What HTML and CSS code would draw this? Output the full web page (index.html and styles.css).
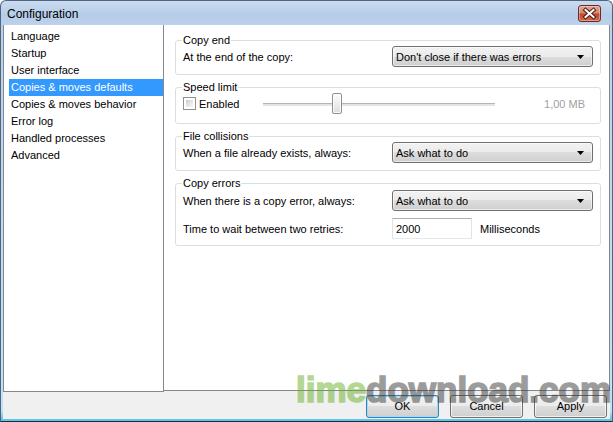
FILE: index.html
```html
<!DOCTYPE html>
<html>
<head>
<meta charset="utf-8">
<title>Configuration</title>
<link rel="stylesheet" href="styles.css">
</head>
<body>
<div class="window">
  <div class="titlebar">
    <span class="title">Configuration</span>
    <button class="close" aria-label="Close">
      <svg width="23" height="17" viewBox="0 0 23 17">
        <path d="M7.5 5L15.5 12M15.5 5L7.5 12" stroke="#4a1a12" stroke-width="4" stroke-linecap="square"/>
        <path d="M7.5 5L15.5 12M15.5 5L7.5 12" stroke="#ffffff" stroke-width="2" stroke-linecap="square"/>
      </svg>
    </button>
  </div>
  <div class="client">
    <div class="main">
      <ul class="nav">
        <li>Language</li>
        <li>Startup</li>
        <li>User interface</li>
        <li class="sel">Copies &amp; moves defaults</li>
        <li>Copies &amp; moves behavior</li>
        <li>Error log</li>
        <li>Handled processes</li>
        <li>Advanced</li>
      </ul>
      <div class="panel">
        <fieldset class="group g1">
          <legend>Copy end</legend>
          <div class="row">
            <span class="lbl">At the end of the copy:</span>
            <div class="combo"><span>Don't close if there was errors</span><svg class="arrow" width="7" height="4" viewBox="0 0 7 4"><path d="M0 0H7L3.5 4Z" fill="#000"/></svg></div>
          </div>
        </fieldset>
        <fieldset class="group g2">
          <legend>Speed limit</legend>
          <div class="row speed">
            <label class="check"><span class="box"></span>Enabled</label>
            <div class="slider"><div class="track"></div><div class="handle"></div></div>
            <span class="mb">1,00 MB</span>
          </div>
        </fieldset>
        <fieldset class="group g3">
          <legend>File collisions</legend>
          <div class="row">
            <span class="lbl">When a file already exists, always:</span>
            <div class="combo"><span>Ask what to do</span><svg class="arrow" width="7" height="4" viewBox="0 0 7 4"><path d="M0 0H7L3.5 4Z" fill="#000"/></svg></div>
          </div>
        </fieldset>
        <fieldset class="group g4">
          <legend>Copy errors</legend>
          <div class="row r1">
            <span class="lbl">When there is a copy error, always:</span>
            <div class="combo"><span>Ask what to do</span><svg class="arrow" width="7" height="4" viewBox="0 0 7 4"><path d="M0 0H7L3.5 4Z" fill="#000"/></svg></div>
          </div>
          <div class="row r2">
            <span class="lbl">Time to wait between two retries:</span>
            <div class="input">2000</div>
            <span class="unit">Milliseconds</span>
          </div>
        </fieldset>
      </div>
    </div>
    <div class="buttons">
      <button class="btn default">OK</button>
      <button class="btn">Cancel</button>
      <button class="btn">Apply</button>
    </div>
  </div>
  <div class="watermark"><span class="lime">lime</span><span class="rest">download.com</span></div>
</div>
</body>
</html>
```
FILE: styles.css
```css
html, body {
  margin: 0;
  padding: 0;
}
body {
  width: 613px;
  height: 422px;
  overflow: hidden;
  background: #ffffff;
  font-family: "Liberation Sans", Arial, sans-serif;
  font-size: 11px;
  color: #000;
}
.window {
  position: relative;
  box-sizing: border-box;
  width: 613px;
  height: 422px;
  border: 1px solid #4f6681;
  border-bottom-color: #1d2a38;
  border-radius: 6px 6px 0 0;
  background: linear-gradient(to bottom, #c9dbf0 0, #b6cde8 14px, #bcd2eb 24px, #c3d8ee 200px, #bfe2f4 410px, #5cc6ee 418px, #5cc6ee 422px);
  display: flex;
  flex-direction: column;
  overflow: hidden;
}
.titlebar {
  height: 24px;
  flex: none;
  display: flex;
  align-items: center;
  justify-content: space-between;
  padding: 0 11px 0 6px;
}
.title {
  font-size: 12px;
  color: #000;
  padding-top: 1px;
}
.close {
  width: 23px;
  height: 17px;
  padding: 0;
  margin: 0;
  border: 1px solid #6d2a20;
  border-radius: 3px;
  background: linear-gradient(to bottom, #e4a393 0, #d88471 45%, #c4462c 55%, #d16a4c 100%);
  box-shadow: inset 0 0 0 1px rgba(255, 255, 255, 0.35);
  display: flex;
  align-items: center;
  justify-content: center;
  box-sizing: border-box;
}
.close svg {
  display: block;
  flex: none;
}
.client {
  flex: 1;
  margin: 0 2px 2px 2px;
  background: #f0f0f0;
  display: flex;
  flex-direction: column;
}
.main {
  display: flex;
  align-items: flex-start;
  height: 367px;
  flex: none;
}
.nav {
  list-style: none;
  margin: 0;
  padding: 3px 0 0 5px;
  box-sizing: border-box;
  width: 161px;
  height: 367px;
  flex: none;
  background: #fff;
  border: 1px solid #828790;
  border-top: none;
}
.nav li {
  height: 17px;
  line-height: 17px;
  padding-left: 2px;
  white-space: nowrap;
}
.nav li.sel {
  background: #3399ff;
  color: #fff;
}
.panel {
  flex: 1;
  height: 366px;
  box-sizing: border-box;
  background: #fff;
  border-right: 1px solid #828790;
  border-bottom: 1px solid #828790;
  padding: 9px 8px 0 11px;
  display: flex;
  flex-direction: column;
  gap: 6px;
}
.group {
  margin: 0;
  padding: 0 7px 7px 7px;
  border: 1px solid #d5dfe5;
  border-radius: 3px;
  min-width: 0;
}
.group legend {
  padding: 0 1px;
  margin-left: -1px;
  line-height: 12px;
  font-size: 11px;
}
.g2 {
  padding-bottom: 9px;
}
.g4 {
  padding-bottom: 6px;
}
.row {
  display: flex;
  align-items: center;
  height: 21px;
}
.g4 .r1 {
  margin-top: 1px;
}
.g4 .r2 {
  margin-top: 7px;
}
.lbl {
  width: 209px;
  flex: none;
  white-space: nowrap;
}
.combo {
  width: 201px;
  height: 21px;
  box-sizing: border-box;
  border: 1px solid #707070;
  border-radius: 3px;
  background: linear-gradient(to bottom, #f2f2f2 0, #ebebeb 50%, #dddddd 50%, #cfcfcf 100%);
  box-shadow: inset 0 0 0 1px rgba(255, 255, 255, 0.6);
  display: flex;
  align-items: center;
  justify-content: space-between;
  padding: 0 8px 0 3px;
  white-space: nowrap;
}
.arrow {
  display: block;
  flex: none;
}
.check {
  width: 80px;
  flex: none;
  display: flex;
  align-items: center;
}
.box {
  width: 13px;
  height: 13px;
  box-sizing: border-box;
  border: 1px solid #8e8f8f;
  background: #fff;
  margin-right: 3px;
  position: relative;
  flex: none;
}
.box::after {
  content: "";
  position: absolute;
  left: 2px;
  top: 2px;
  width: 7px;
  height: 7px;
  background: linear-gradient(135deg, #c9cbcd 0, #e8e9ea 60%, #f4f4f4 100%);
  border: 0;
}
.slider {
  position: relative;
  width: 232px;
  height: 21px;
  flex: none;
}
.track {
  position: absolute;
  left: 0;
  right: 0;
  top: 10px;
  height: 3px;
  box-sizing: border-box;
  border-top: 1px solid #b4b4b4;
  background: #e4e4e4;
}
.handle {
  position: absolute;
  left: 69px;
  top: 0;
  width: 10px;
  height: 21px;
  box-sizing: border-box;
  border: 1px solid #8f8f8f;
  border-radius: 2px;
  background: linear-gradient(to bottom, #fbfbfb 0, #eeeeee 50%, #dedede 100%);
  box-shadow: inset 0 0 0 1px rgba(255, 255, 255, 0.8);
}
.mb {
  margin-left: auto;
  margin-right: 8px;
  color: #a0a0a0;
}
.input {
  width: 80px;
  height: 21px;
  box-sizing: border-box;
  border: 1px solid #e2e3ea;
  border-top-color: #abadb3;
  border-bottom-color: #e3e9ef;
  background: #fff;
  padding-left: 3px;
  display: flex;
  align-items: center;
  flex: none;
}
.unit {
  margin-left: 8px;
}
.buttons {
  flex: 1;
  display: flex;
  justify-content: flex-end;
  align-items: flex-start;
  gap: 11px;
  padding: 3px 3px 0 0;
}
.btn {
  width: 73px;
  height: 23px;
  box-sizing: border-box;
  margin: 0;
  padding: 0 0 1px 0;
  font-family: "Liberation Sans", Arial, sans-serif;
  font-size: 11px;
  color: #000;
  border: 1px solid #707070;
  border-radius: 3px;
  background: linear-gradient(to bottom, #f2f2f2 0, #ebebeb 50%, #dddddd 50%, #cfcfcf 100%);
  box-shadow: inset 0 0 0 1px rgba(255, 255, 255, 0.7);
}
.btn.default {
  border-color: #3c7fb1;
  box-shadow: inset 0 0 0 1px #9fdcf8;
}
.watermark {
  position: absolute;
  left: 295px;
  top: 371px;
  font-family: "Liberation Sans", Arial, sans-serif;
  font-weight: 700;
  font-size: 35px;
  line-height: 35px;
  white-space: nowrap;
  pointer-events: none;
  opacity: 0.5;
  -webkit-text-stroke-width: 1.6px;
}
.lime {
  color: #6bb129;
  -webkit-text-stroke-color: #6bb129;
}
.rest {
  color: #3b3b3b;
  -webkit-text-stroke-color: #3b3b3b;
}
```
